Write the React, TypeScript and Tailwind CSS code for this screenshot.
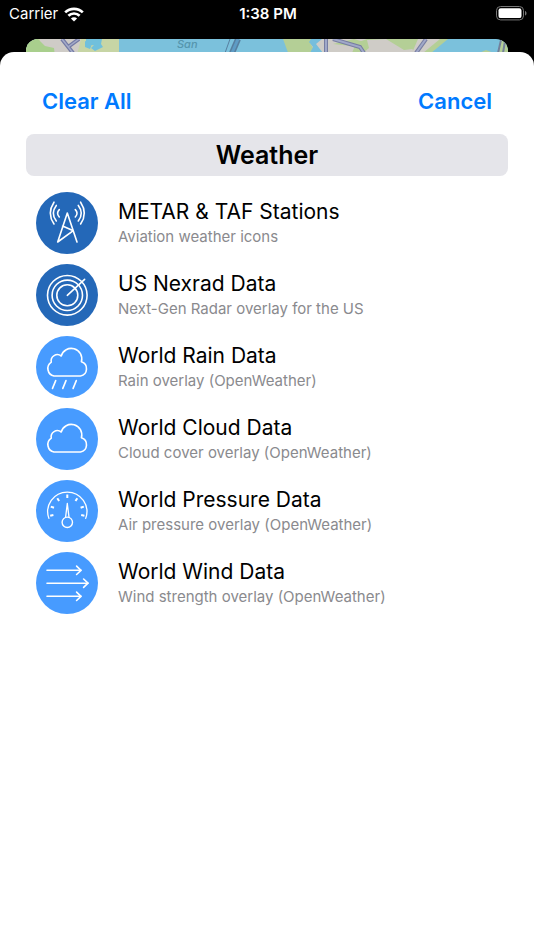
import type { ReactNode } from "react"

const CLOUD_PATH =
  "M18 40A7.6 7.6 0 0 1 15.3 26.2A6.2 6.2 0 0 1 25.2 20A10.4 10.4 0 0 1 45.4 25.7A7.4 7.4 0 0 1 44.5 40Z"

type Layer = {
  title: string
  detail: string
  color: string
  icon: ReactNode
}

const layers: Layer[] = [
  {
    title: "METAR & TAF Stations",
    detail: "Aviation weather icons",
    color: "bg-[#2468b8]",
    icon: <StationIcon />,
  },
  {
    title: "US Nexrad Data",
    detail: "Next-Gen Radar overlay for the US",
    color: "bg-[#2468b8]",
    icon: <RadarIcon />,
  },
  {
    title: "World Rain Data",
    detail: "Rain overlay (OpenWeather)",
    color: "bg-[#479bff]",
    icon: <RainIcon />,
  },
  {
    title: "World Cloud Data",
    detail: "Cloud cover overlay (OpenWeather)",
    color: "bg-[#479bff]",
    icon: <CloudIcon />,
  },
  {
    title: "World Pressure Data",
    detail: "Air pressure overlay (OpenWeather)",
    color: "bg-[#479bff]",
    icon: <GaugeIcon />,
  },
  {
    title: "World Wind Data",
    detail: "Wind strength overlay (OpenWeather)",
    color: "bg-[#479bff]",
    icon: <WindIcon />,
  },
]

export default function App() {
  return (
    <div className="flex min-h-screen flex-col bg-black font-['Inter',sans-serif] text-black">
      <StatusBar />
      <MapStrip />
      <main className="z-10 flex-1 rounded-t-[14px] bg-white px-[26px] pt-8">
        <header className="flex items-center justify-between px-4">
          <button type="button" className="text-[22px] leading-[34px] font-semibold text-[#007aff]">
            Clear All
          </button>
          <button type="button" className="text-[22px] leading-[34px] font-semibold text-[#007aff]">
            Cancel
          </button>
        </header>
        <h1 className="mt-4 rounded-lg bg-[#e5e5ea] text-center text-[25px] leading-[42px] font-semibold">
          Weather
        </h1>
        <ul className="mt-4 flex flex-col gap-[10px] px-[10px]">
          {layers.map((layer) => (
            <li key={layer.title}>
              <LayerRow layer={layer} />
            </li>
          ))}
        </ul>
      </main>
    </div>
  )
}

function StatusBar() {
  return (
    <div className="grid h-[39px] grid-cols-3 items-start pt-1 pr-[7px] pl-[9px] text-[15px] leading-5 text-white">
      <div className="flex items-center gap-[6px]">
        <span>Carrier</span>
        <svg width="20" height="15" viewBox="0 0 20 15" fill="none" stroke="white" strokeWidth="2.7">
          <path d="M1.2 5.4A12.6 12.6 0 0 1 18.8 5.4" />
          <path d="M4.4 8.8A8 8 0 0 1 15.6 8.8" />
          <path d="M10 14.6L6.9 11.5A4.4 4.4 0 0 1 13.1 11.5Z" fill="white" stroke="none" />
        </svg>
      </div>
      <span className="text-center font-semibold">1:38 PM</span>
      <svg className="mt-[2px] justify-self-end" width="31" height="15" viewBox="0 0 31 15" fill="none">
        <rect x="0.5" y="0.5" width="27" height="13.4" rx="4" stroke="#777" />
        <rect x="2.5" y="2.3" width="23" height="9.8" rx="2.2" fill="white" />
        <path d="M29 5V9.6C31 9 31 5.6 29 5Z" fill="#777" />
      </svg>
    </div>
  )
}

// Sliver of the map that stays visible behind the sheet
function MapStrip() {
  return (
    <div className="relative -mb-[14px] h-[27px] px-[26px]">
      <svg
        className="block h-[27px] w-full rounded-t-[12px]"
        viewBox="0 0 482 27"
        preserveAspectRatio="none"
        aria-hidden="true"
      >
        <rect width="482" height="27" fill="#7bc1dc" />
        <path d="M0 0H93V27H0Z" fill="#c7d5a5" />
        <path d="M14 0H55L48 27H22L14 8Z" fill="#cfccc7" />
        <path d="M0 0H12L19 7L28 9L30 27H0Z" fill="#a9cf8d" />
        <path d="M60 0H76L75 5L77 8L69 12L65 9L68 6L60 7ZM59 2L66 5L64 10L59 8Z" fill="#70c0dc" />
        <g fill="none">
          <path d="M36 0L47 14M53 0L42 8" stroke="#747ba5" strokeWidth="4" />
          <path d="M36 0L47 14M53 0L42 8" stroke="#a3aac8" strokeWidth="1.5" />
          <path d="M212 0L206 14" stroke="#577f9f" strokeWidth="6" />
          <path d="M212 0L206 14" stroke="#5e9cc5" strokeWidth="3" />
          <path d="M204 0L199 14" stroke="#577f9f" />
        </g>
        <path d="M257 0H406L386 27H267Z" fill="#b4cf96" />
        <path d="M290 0H341L330 4L326 14H290L284 4Z" fill="#cfccc7" />
        <path d="M285 0H296L290 5L297 14H284L287 8L283 3Z" fill="#75bedc" />
        <path d="M307 5L328 0L341 4L334 8Z" fill="#b4cf96" />
        <path d="M341 1L360 0L378 11L386 10L391 14H337L343 9Z" fill="#cfccc7" />
        <path d="M392 0H417L401 14H386Z" fill="#cfccc7" />
        <g fill="none">
          <path d="M300 0V14M307 0L334 8L338 14" stroke="#777da2" strokeWidth="4" />
          <path d="M300 0V14M307 0L334 8L338 14" stroke="#a0a8c8" strokeWidth="2" />
          <path d="M400 0L390 14" stroke="#777da2" strokeWidth="4" />
          <path d="M400 0L390 14" stroke="#a0a8c8" strokeWidth="2" />
        </g>
        <path d="M414 0L397 14H405L422 0Z" fill="#b4cf96" />
        <path d="M453 14L460 11L468 14Z" fill="#b4cf96" />
        <path d="M475 0L473 14H482V3Z" fill="#b4cf96" />
        <path d="M475 1L472 14M479 2L477 14" stroke="#73809b" strokeWidth="2" />
      </svg>
      <span className="absolute top-0 left-[177px] text-[11px] leading-[11px] font-medium text-[#5595ad] italic">
        San
      </span>
    </div>
  )
}

function LayerRow({ layer }: { layer: Layer }) {
  return (
    <button type="button" className="flex w-full items-center gap-5 text-left">
      <span className={`size-[62px] shrink-0 rounded-full ${layer.color}`}>{layer.icon}</span>
      <span className="flex flex-col">
        <span className="text-[21px] leading-7">{layer.title}</span>
        <span className="text-[15px] leading-[22px] text-[#8a8a8e]">{layer.detail}</span>
      </span>
    </button>
  )
}

function Glyph({ children }: { children: ReactNode }) {
  return (
    <svg
      className="block size-full"
      viewBox="0 0 62 62"
      fill="none"
      stroke="white"
      strokeWidth="1.6"
      strokeLinecap="round"
      strokeLinejoin="round"
      aria-hidden="true"
    >
      {children}
    </svg>
  )
}

function StationIcon() {
  return (
    <Glyph>
      <path d="M41 50L31.3 21L21.7 50L37.3 38.7L26.6 34" />
      <path d="M23.3 17.6Q19.8 21.3 23.3 25M20.3 13.4Q14.3 21.3 20.3 29M18 10.2Q10.6 21.3 18 32" />
      <path d="M39.3 17.6Q42.8 21.3 39.3 25M42.3 13.4Q48.3 21.3 42.3 29M44.6 10.2Q52 21.3 44.6 32" />
    </Glyph>
  )
}

function RadarIcon() {
  return (
    <Glyph>
      <circle cx="31.3" cy="31.3" r="19.8" />
      <circle cx="31.3" cy="31.3" r="15.2" />
      <circle cx="31.3" cy="31.3" r="10.5" />
      <path d="M31.3 31.3L48.6 15.4" />
    </Glyph>
  )
}

function RainIcon() {
  return (
    <Glyph>
      <path d={CLOUD_PATH} />
      <path d="M19.7 44.6L16.5 52.4M30 44.6L26.8 52.4M40.3 44.6L37.1 52.4" />
    </Glyph>
  )
}

function CloudIcon() {
  return (
    <Glyph>
      <path d={CLOUD_PATH} transform="translate(0 4)" />
    </Glyph>
  )
}

function GaugeIcon() {
  return (
    <Glyph>
      <path d="M12.9 38.4A19.6 19.6 0 1 1 49.7 38.4" strokeWidth="1.3" />
      <path
        d="M31.3 14.4V18M21.3 18.2L23.1 21M41.3 18.2L39.5 21M14.8 26.6L18 27.8M47.8 26.6L44.6 27.8M14.2 35.8L17.4 35.1M48.4 35.8L45.2 35.1"
        strokeWidth="2"
        strokeLinecap="butt"
      />
      <circle cx="31.3" cy="42.3" r="5.2" strokeWidth="1.4" />
      <path d="M31.3 23.5L29.6 37.2M31.3 23.5L33 37.2" strokeWidth="1.3" />
    </Glyph>
  )
}

function WindIcon() {
  return (
    <Glyph>
      <path d="M11 18.3H45M11 31.2H52M11 44.3H45" />
      <path d="M40.6 14.1L45 18.3L40.6 22.5M47.6 27L52 31.2L47.6 35.4M40.6 40.1L45 44.3L40.6 48.5" />
    </Glyph>
  )
}
